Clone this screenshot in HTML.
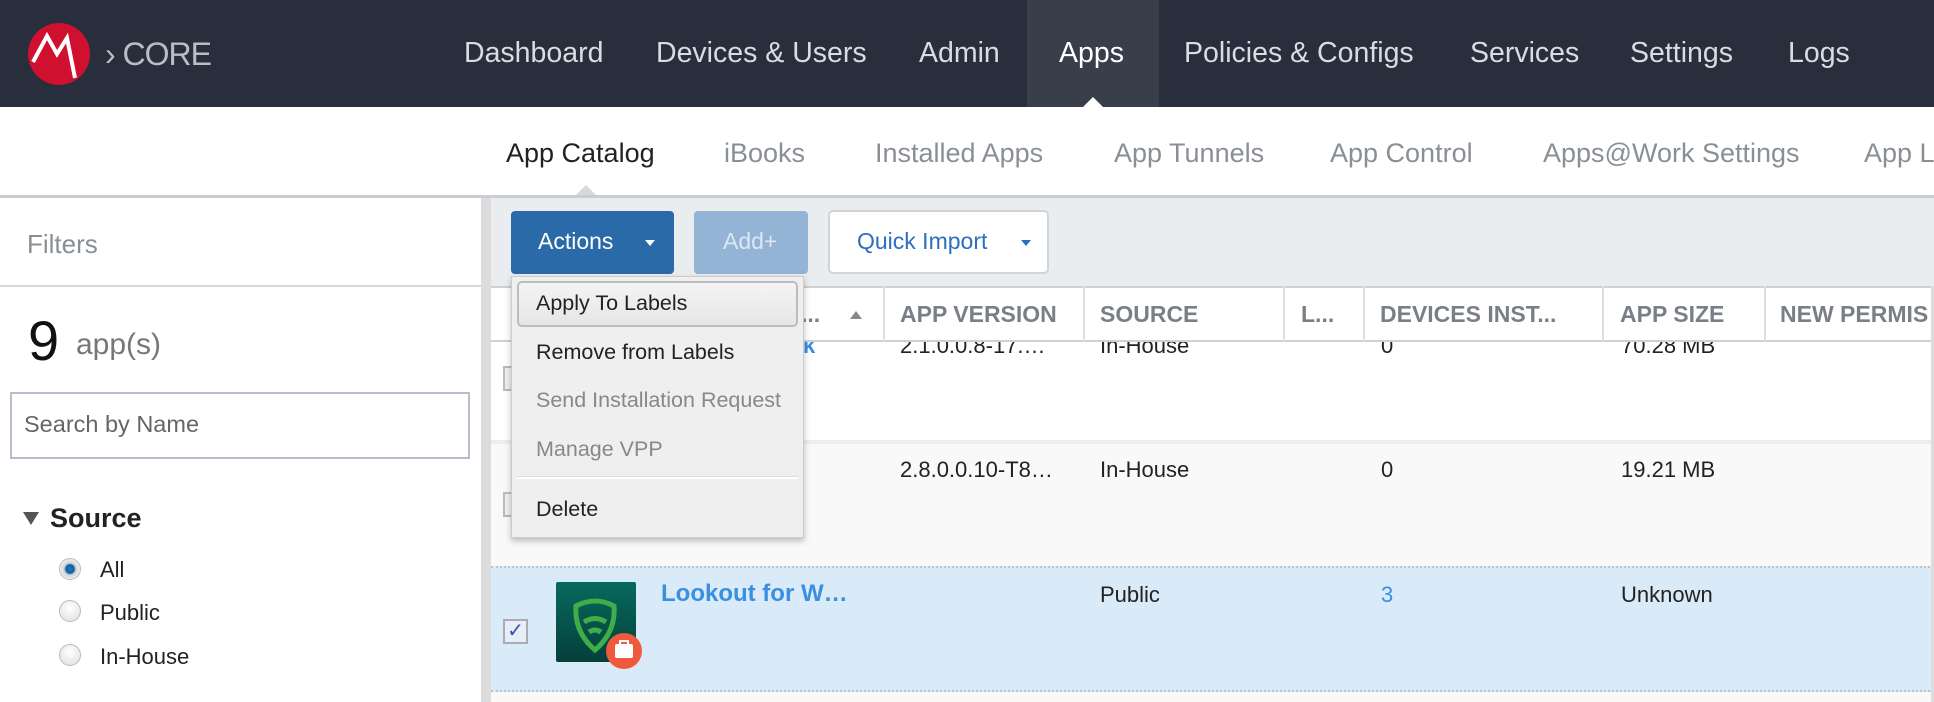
<!DOCTYPE html>
<html><head><style>
*{margin:0;padding:0;box-sizing:border-box}
body{width:1934px;height:702px;overflow:hidden;position:relative;font-family:"Liberation Sans",Arial,sans-serif;background:#fff}
.a{position:absolute;white-space:nowrap}
.nav{color:#d9dde2;font-size:28.5px;top:37px}
.sub{color:#8a8f96;font-size:27px;top:138px}
.th{font-size:23px;font-weight:bold;color:#7a7f85;top:301px}
.td{font-size:22px;color:#222}
.mi{font-size:21.5px;color:#222;left:536px}
.radio{width:22px;height:22px;border-radius:50%;border:1px solid #bbb;background:radial-gradient(circle at 50% 35%,#fff,#ddd)}
</style></head><body>
<!-- top nav -->
<div class="a" style="left:0;top:0;width:1934px;height:107px;background:#282e3c"></div>
<div class="a" style="left:1027px;top:0;width:132px;height:107px;background:#393f4a"></div>
<div class="a" style="left:1082px;top:97px;width:0;height:0;border-left:11px solid transparent;border-right:11px solid transparent;border-bottom:11px solid #fff"></div>
<svg class="a" style="left:27px;top:22px" width="64" height="64" viewBox="0 0 64 64"><circle cx="32" cy="32" r="31" fill="#d0102f"/><path d="M6 40 L20 14 L30 32 L40 16 L48 56" fill="none" stroke="#fff" stroke-width="4" stroke-linejoin="miter"/></svg>
<div class="a" style="left:105px;top:36px;font-size:32px;color:#b9bec5;letter-spacing:-1px">›&nbsp;CORE</div>
<div class="a nav" style="left:464px">Dashboard</div>
<div class="a nav" style="left:656px">Devices &amp; Users</div>
<div class="a nav" style="left:919px">Admin</div>
<div class="a nav" style="left:1059px;color:#fff">Apps</div>
<div class="a nav" style="left:1184px">Policies &amp; Configs</div>
<div class="a nav" style="left:1470px">Services</div>
<div class="a nav" style="left:1630px">Settings</div>
<div class="a nav" style="left:1788px">Logs</div>
<!-- sub nav -->
<div class="a sub" style="left:506px;color:#222">App Catalog</div>
<div class="a sub" style="left:724px">iBooks</div>
<div class="a sub" style="left:875px">Installed Apps</div>
<div class="a sub" style="left:1114px">App Tunnels</div>
<div class="a sub" style="left:1330px">App Control</div>
<div class="a sub" style="left:1543px">Apps@Work Settings</div>
<div class="a sub" style="left:1864px">App L</div>
<div class="a" style="left:0;top:195px;width:1934px;height:3px;background:#c9ccd0"></div>
<div class="a" style="left:576px;top:185px;width:0;height:0;border-left:10px solid transparent;border-right:10px solid transparent;border-bottom:10px solid #d5d8dc"></div>
<!-- sidebar -->
<div class="a" style="left:27px;top:229px;font-size:26px;color:#8a8f96">Filters</div>
<div class="a" style="left:0;top:285px;width:481px;height:2px;background:#d8d8d8"></div>
<div class="a" style="left:28px;top:308px;font-size:56px;color:#111">9</div>
<div class="a" style="left:76px;top:328px;font-size:30px;color:#777">app(s)</div>
<div class="a" style="left:10px;top:392px;width:460px;height:67px;border:2px solid #b8bccb;background:#fff"></div>
<div class="a" style="left:24px;top:411px;font-size:23.5px;color:#666">Search by Name</div>
<div class="a" style="left:23px;top:512px;width:0;height:0;border-left:8px solid transparent;border-right:8px solid transparent;border-top:13px solid #555"></div>
<div class="a" style="left:50px;top:503px;font-size:27px;font-weight:bold;color:#222">Source</div>
<div class="a radio" style="left:59px;top:558px;background:radial-gradient(circle,#1f7fc0 0,#0e5d97 4px,#cfd6dc 6px,#eee 10px)"></div>
<div class="a radio" style="left:59px;top:600px"></div>
<div class="a radio" style="left:59px;top:644px"></div>
<div class="a" style="left:100px;top:557px;font-size:22px;color:#222">All</div>
<div class="a" style="left:100px;top:600px;font-size:22px;color:#222">Public</div>
<div class="a" style="left:100px;top:644px;font-size:22px;color:#222">In-House</div>
<div class="a" style="left:481px;top:198px;width:10px;height:504px;background:#dcdcdc"></div>
<!-- main -->
<div class="a" style="left:491px;top:198px;width:1443px;height:88px;background:#eaedf0"></div>
<div class="a" style="left:511px;top:211px;width:163px;height:63px;background:#2b6aa8;border-radius:4px"></div>
<div class="a" style="left:538px;top:228px;font-size:23px;color:#fff">Actions</div>
<div class="a" style="left:645px;top:240px;border-left:5px solid transparent;border-right:5px solid transparent;border-top:6px solid #fff"></div>
<div class="a" style="left:694px;top:211px;width:114px;height:63px;background:#93b4d4;border-radius:4px"></div>
<div class="a" style="left:723px;top:228px;font-size:23px;color:#dde8f2">Add+</div>
<div class="a" style="left:828px;top:210px;width:221px;height:64px;background:#fff;border:2px solid #d0d4d8;border-radius:5px"></div>
<div class="a" style="left:857px;top:228px;font-size:23px;color:#2b6fbd">Quick Import</div>
<div class="a" style="left:1021px;top:240px;border-left:5px solid transparent;border-right:5px solid transparent;border-top:6px solid #2b6fbd"></div>
<!-- table header -->
<div class="a" style="left:491px;top:286px;width:1443px;height:56px;background:#fff;border-top:2px solid #d0d0d0;border-bottom:2px solid #d0d0d0"></div>
<div class="a" style="left:883px;top:286px;width:2px;height:56px;background:#ddd"></div>
<div class="a" style="left:1083px;top:286px;width:2px;height:56px;background:#ddd"></div>
<div class="a" style="left:1283px;top:286px;width:2px;height:56px;background:#ddd"></div>
<div class="a" style="left:1363px;top:286px;width:2px;height:56px;background:#ddd"></div>
<div class="a" style="left:1602px;top:286px;width:2px;height:56px;background:#ddd"></div>
<div class="a" style="left:1764px;top:286px;width:2px;height:56px;background:#ddd"></div>
<div class="a th" style="left:801px">...</div>
<div class="a" style="left:850px;top:311px;border-left:6px solid transparent;border-right:6px solid transparent;border-bottom:8px solid #888"></div>
<div class="a th" style="left:900px">APP VERSION</div>
<div class="a th" style="left:1100px">SOURCE</div>
<div class="a th" style="left:1301px">L...</div>
<div class="a th" style="left:1380px">DEVICES INST...</div>
<div class="a th" style="left:1620px">APP SIZE</div>
<div class="a th" style="left:1780px">NEW PERMIS</div>
<!-- rows -->
<div class="a" style="left:491px;top:342px;width:1443px;height:98px;background:#fff;overflow:hidden">
<div class="a td" style="left:409px;top:-9px">2.1.0.0.8-17.…</div>
<div class="a td" style="left:609px;top:-9px">In-House</div>
<div class="a td" style="left:890px;top:-9px">0</div>
<div class="a td" style="left:1130px;top:-9px">70.28 MB</div>
<div class="a td" style="left:312px;top:-9px;color:#3a8fe0;font-weight:bold">k</div>
</div>
<div class="a" style="left:491px;top:440px;width:1443px;height:4px;background:#ededed"></div>
<div class="a" style="left:491px;top:444px;width:1443px;height:122px;background:#f9f9f9"></div>
<div class="a td" style="left:900px;top:457px">2.8.0.0.10-T8…</div>
<div class="a td" style="left:1100px;top:457px">In-House</div>
<div class="a td" style="left:1381px;top:457px">0</div>
<div class="a td" style="left:1621px;top:457px">19.21 MB</div>
<div class="a" style="left:503px;top:366px;width:14px;height:25px;border:2px solid #bbb;background:#eee"></div>
<div class="a" style="left:503px;top:492px;width:14px;height:25px;border:2px solid #bbb;background:#eee"></div>
<div class="a" style="left:491px;top:566px;width:1443px;height:126px;background:#d9eaf8;border-top:2px dotted #b9c3cc;border-bottom:2px dotted #b9c3cc"></div>
<div class="a" style="left:503px;top:619px;width:25px;height:25px;border:2px solid #aab;background:#e8eef6;color:#3b4fa8;font-size:20px;line-height:20px;text-align:center">✓</div>
<div class="a" style="left:556px;top:582px;width:80px;height:80px;background:linear-gradient(#066a5d,#053f3a);border-radius:2px"></div>
<svg class="a" style="left:572px;top:598px" width="46" height="56" viewBox="0 0 46 56"><path d="M4 8 Q23 -2 42 8 Q44 34 23 52 Q2 34 4 8Z" fill="none" stroke="#3fae49" stroke-width="5"/><path d="M12 24 Q23 17 34 24" fill="none" stroke="#3fae49" stroke-width="5"/><path d="M17 34 Q23 30 29 34" fill="none" stroke="#3fae49" stroke-width="5"/></svg>
<div class="a" style="left:606px;top:633px;width:36px;height:36px;border-radius:50%;background:#ef5a3c"></div>
<div class="a" style="left:615px;top:644px;width:18px;height:14px;background:#fff;border-radius:2px"></div>
<div class="a" style="left:619px;top:640px;width:10px;height:6px;border:2px solid #fff;border-bottom:none"></div>
<div class="a" style="left:661px;top:580px;font-size:24px;font-weight:bold;color:#3a8fe0">Lookout for W…</div>
<div class="a td" style="left:1100px;top:582px">Public</div>
<div class="a td" style="left:1381px;top:582px;color:#3a8fe0">3</div>
<div class="a td" style="left:1621px;top:582px">Unknown</div>
<div class="a" style="left:491px;top:692px;width:1443px;height:10px;background:#f9f9f9"></div>
<div class="a" style="left:1931px;top:286px;width:3px;height:416px;background:#ddd"></div>
<!-- dropdown -->
<div class="a" style="left:511px;top:276px;width:293px;height:262px;background:#efefef;border:1px solid #ccc;box-shadow:0 3px 6px rgba(0,0,0,.25)"></div>
<div class="a" style="left:517px;top:281px;width:281px;height:46px;border:2px solid #bdbdbd;border-radius:5px;background:linear-gradient(#f4f4f4,#e6e6e6)"></div>
<div class="a mi" style="top:291px">Apply To Labels</div>
<div class="a mi" style="top:340px">Remove from Labels</div>
<div class="a mi" style="top:388px;color:#888">Send Installation Request</div>
<div class="a mi" style="top:437px;color:#888">Manage VPP</div>
<div class="a" style="left:517px;top:476px;width:281px;height:3px;background:#fff;border-top:1px solid #ddd"></div>
<div class="a mi" style="top:497px">Delete</div>
</body></html>
